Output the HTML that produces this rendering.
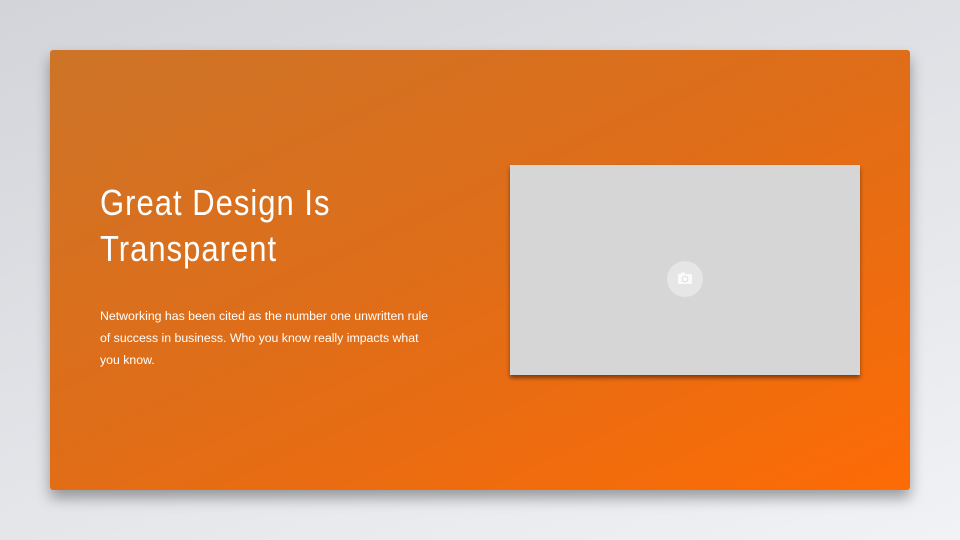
<!DOCTYPE html>
<html><head><style>
html,body{margin:0;padding:0}
body{width:960px;height:540px;overflow:hidden;background:linear-gradient(160deg,#d2d4d9 0%,#e4e6ea 60%,#f1f2f5 100%);position:relative;font-family:"Liberation Sans",sans-serif}
.card{position:absolute;left:50px;top:50px;width:860px;height:440px;border-radius:3px;background:linear-gradient(155deg,#cd7428 0%,#e06d18 50%,#fd6b05 100%);box-shadow:0 8px 14px rgba(0,0,0,0.35)}
h1{position:absolute;left:50px;top:130px;margin:0;color:#fff;font-family:"Liberation Sans",sans-serif;font-weight:normal;font-size:36px;line-height:46px;letter-spacing:1.2px;transform-origin:0 0;transform:scaleX(0.86);white-space:nowrap}
p{position:absolute;left:50px;top:255px;margin:0;width:340px;color:#fff;font-size:12.3px;line-height:22px}
.ph{position:absolute;left:460px;top:115px;width:350px;height:210px;background:#d6d6d6;box-shadow:0 3px 4px rgba(0,0,0,0.45)}
.ic{position:absolute;left:157px;top:96px;width:36px;height:36px;border-radius:50%;background:#e6e6e6}
</style></head><body>
<div class="card">
<h1>Great Design Is<br>Transparent</h1>
<p>Networking has been cited as the number one unwritten rule of success in business. Who you know really impacts what you know.</p>
<div class="ph"><div class="ic"><svg width="36" height="36" viewBox="0 0 36 36"><rect x="11" y="13" width="14" height="10" rx="1" fill="#fafafa"/><rect x="14" y="11.5" width="4" height="2" fill="#fafafa"/><circle cx="18" cy="18" r="2.8" fill="none" stroke="#ddd" stroke-width="1"/></svg></div></div>
</div>
</body></html>
